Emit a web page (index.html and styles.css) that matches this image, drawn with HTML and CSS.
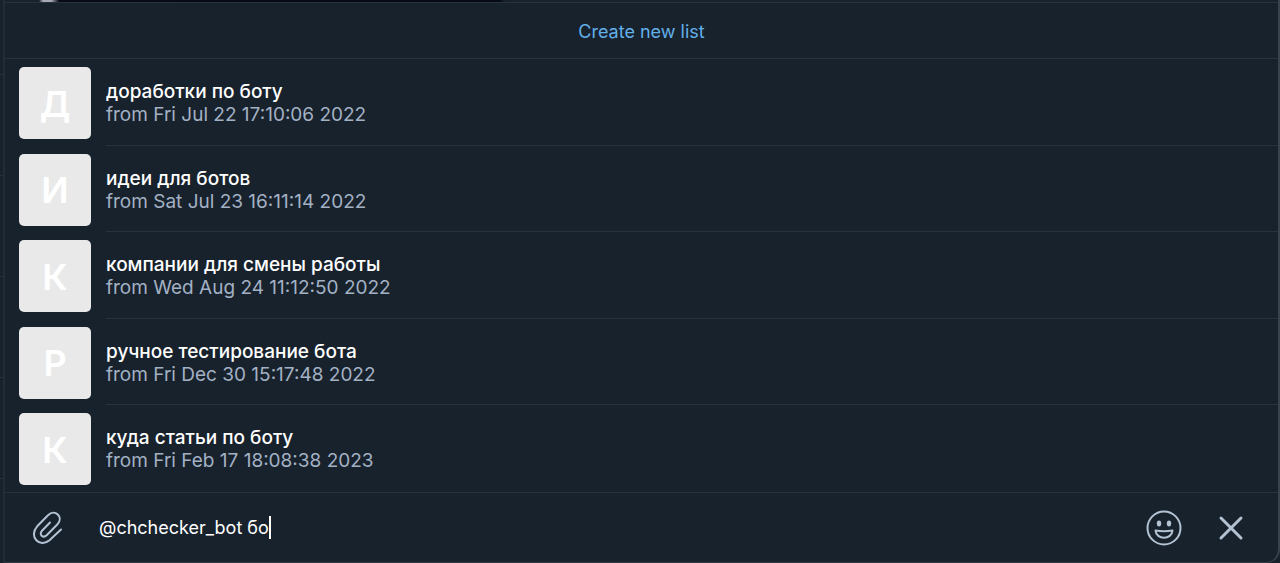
FILE: index.html
```html
<!DOCTYPE html>
<html lang="en">
<head>
    <meta charset="UTF-8">
    <meta name="viewport" content="width=device-width, initial-scale=1.0">
    <title>Inline lists</title>
    <link rel="stylesheet" href="styles.css">
</head>
<body>
    <div class="gutter"><i></i><i></i><i></i><i></i><i></i></div>

    <main class="chat">
        <div class="chat-history"></div>

        <!-- Inline bot results -->
        <section class="results">
            <button type="button" class="create-button">Create new list</button>
            <ul class="lists">
                <li class="list-item">
                    <div class="avatar">Д</div>
                    <div class="info">
                        <h2>доработки по боту</h2>
                        <p>from Fri Jul 22 17:10:06 2022</p>
                    </div>
                </li>
                <li class="list-item">
                    <div class="avatar">И</div>
                    <div class="info">
                        <h2>идеи для ботов</h2>
                        <p>from Sat Jul 23 16:11:14 2022</p>
                    </div>
                </li>
                <li class="list-item">
                    <div class="avatar">К</div>
                    <div class="info">
                        <h2>компании для смены работы</h2>
                        <p>from Wed Aug 24 11:12:50 2022</p>
                    </div>
                </li>
                <li class="list-item">
                    <div class="avatar">Р</div>
                    <div class="info">
                        <h2>ручное тестирование бота</h2>
                        <p>from Fri Dec 30 15:17:48 2022</p>
                    </div>
                </li>
                <li class="list-item">
                    <div class="avatar">К</div>
                    <div class="info">
                        <h2>куда статьи по боту</h2>
                        <p>from Fri Feb 17 18:08:38 2023</p>
                    </div>
                </li>
            </ul>
        </section>

        <!-- Message input -->
        <form class="composer">
            <button type="button" class="icon-button" aria-label="Attach">
                <svg width="36" height="36" viewBox="0 0 36 36">
                    <path d="M20 12.5 L12 20.8 C8.5 24.5 13 28.7 16.7 25.2 L27.5 14.3 C34 7 25 -1.5 18 5.2 L7.2 16.3 C-2 26.5 10 38.5 19.5 30.3 L31 19.5"/>
                </svg>
            </button>
            <label class="message">
                <input type="text" value="@chchecker_bot бо" aria-label="Message">
                <span class="caret"></span>
            </label>
            <button type="button" class="icon-button" aria-label="Emoji">
                <svg width="36" height="36" viewBox="0 0 36 36">
                    <circle cx="18" cy="18" r="16.5"/>
                    <ellipse class="fill" cx="13" cy="13.6" rx="2.2" ry="3"/>
                    <ellipse class="fill" cx="23" cy="13.6" rx="2.2" ry="3"/>
                    <path d="M9.5 20.5 Q18 22 26.5 20.5 C26 30 10 30 9.5 20.5 Z"/>
                </svg>
            </button>
            <button type="button" class="icon-button" aria-label="Close">
                <svg class="cross" width="36" height="36" viewBox="0 0 36 36">
                    <path d="M8 8 L28 28 M28 8 L8 28"/>
                </svg>
            </button>
        </form>
    </main>
</body>
</html>
```
FILE: styles.css
```css
* {
    box-sizing: border-box;
}

body {
    display: flex;
    min-height: 100vh;
    margin: 0;
    background-color: #18222c;
    font-family: Inter, "Noto Sans", sans-serif;
    font-size: 18px;
    line-height: 23px;
    color: #ffffff;
}

h2, p, ul {
    margin: 0;
    padding: 0;
}

button, input {
    padding: 0;
    border: none;
    background: none;
    font: inherit;
    color: inherit;
}

button {
    cursor: pointer;
}

/* Edge of the chat list */
.gutter {
    display: flex;
    flex-direction: column;
    gap: 100px;
    width: 5px;
    padding-top: 74px;
    border-right: 2px solid #202c37;
}

.gutter i {
    height: 1px;
    background-color: #26323d;
}

.chat {
    display: flex;
    flex: 1;
    flex-direction: column;
    border-right: 2px solid #38434d;
    border-bottom: 1px solid #303a44;
    border-bottom-right-radius: 14px;
}

.chat-history {
    height: 2px;
    background: linear-gradient(to right, #18222c 34px, #a9a9b4 38px, #a9a9b4 46px, #070b18 54px, #050a16 495px, #18222c 500px);
}

.results {
    display: flex;
    flex: 1;
    flex-direction: column;
    border-top: 1px solid #26323d;
    border-bottom: 1px solid #26323d;
}

.create-button {
    height: 56px;
    padding-top: 2px;
    border-bottom: 1px solid #26323d;
    color: #62b0ea;
}

.lists {
    display: grid;
    flex: 1;
    grid-auto-rows: 1fr;
    list-style: none;
}

.list-item {
    display: flex;
    padding-left: 14px;
}

.avatar {
    display: flex;
    align-items: center;
    justify-content: center;
    width: 72px;
    height: 72px;
    margin: 8px 15px 6px 0;
    padding-top: 2px;
    border-radius: 5px;
    background-color: #e9e9e9;
    font-size: 36px;
    font-weight: 600;
}

.info {
    flex: 1;
    padding-top: 21px;
    border-bottom: 1px solid #26323d;
    font-size: 19px;
}

.list-item:last-child .info {
    border-bottom: none;
}

.info h2 {
    font-size: 19px;
    font-weight: 500;
}

.info p {
    color: #a3b1c4;
}

.composer {
    display: flex;
    align-items: center;
    height: 69px;
    padding: 0 29px 0 25px;
}

.icon-button {
    width: 36px;
    height: 36px;
}

.icon-button + .icon-button {
    margin-left: 31px;
}

.icon-button svg {
    display: block;
    fill: none;
    stroke: #b3c3d3;
    stroke-width: 2;
    stroke-linecap: round;
    stroke-linejoin: round;
}

.icon-button .fill {
    fill: #b3c3d3;
    stroke: none;
}

.icon-button .cross {
    stroke-width: 3;
}

.message {
    display: flex;
    flex: 1;
    align-items: center;
    padding-left: 33px;
}

.message input {
    field-sizing: content;
    outline: none;
    caret-color: transparent;
}

.caret {
    width: 2px;
    height: 23px;
    background-color: #ffffff;
}
```
